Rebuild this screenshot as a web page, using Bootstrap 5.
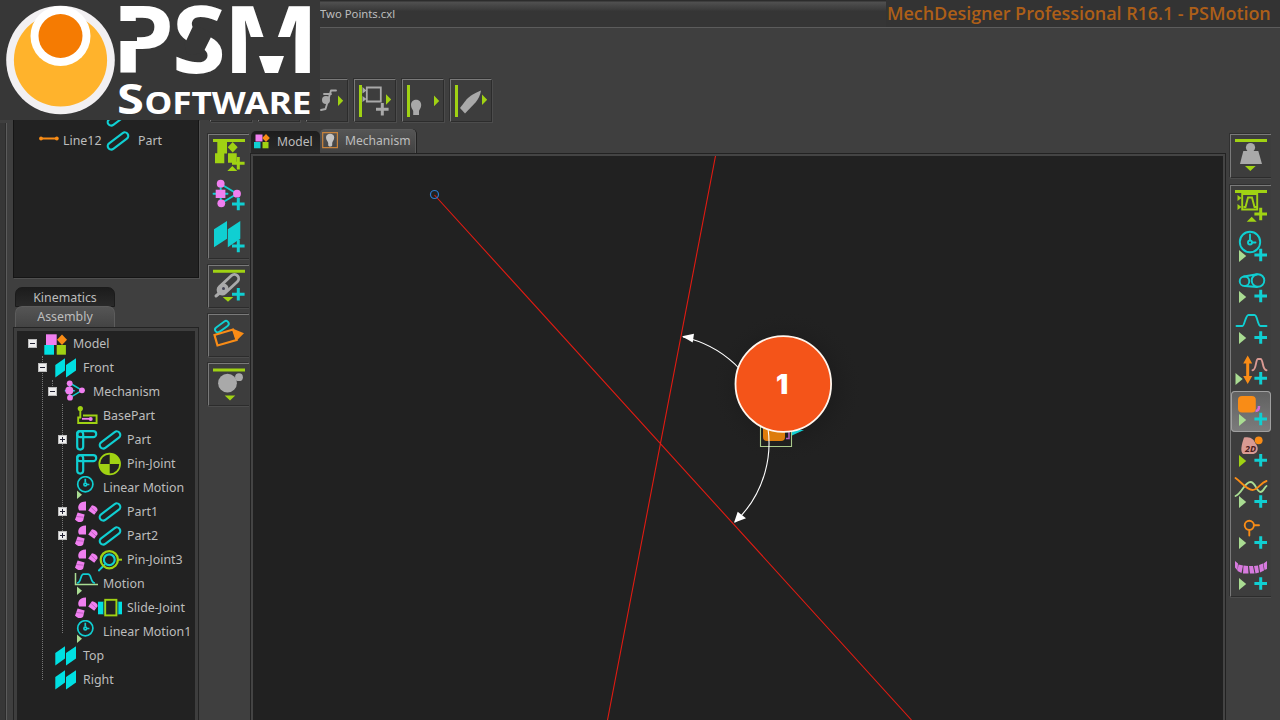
<!DOCTYPE html>
<html lang="en">
<head>
<meta charset="utf-8">
<meta name="viewport" content="width=device-width, initial-scale=1">
<title>MechDesigner Professional R16.1 - PSMotion</title>
<link rel="stylesheet" href="https://cdn.jsdelivr.net/npm/bootstrap@5.3.0/dist/css/bootstrap.min.css">
<script src="https://cdn.jsdelivr.net/npm/bootstrap@5.3.0/dist/js/bootstrap.bundle.min.js"></script>
<style>
  :root { --lime:#a0d213; --cyan:#10cfd2; --pink:#f07ff0; --orange:#f98c16; --mint:#a9dc92; --grey:#a9a9a9; --well:#222; }
  body { width:1280px; height:720px; overflow:hidden; background:#3f3f3f; color:#bdbdbd; font:12.4px/24px "Noto Sans","Open Sans",sans-serif; }
  svg { display:block; flex:none; }
  .titlebar { height:28px; background:linear-gradient(#2c2c2c 0 1px,#505050 2px,#3a3a3a 10px,#353535 11px); border-bottom:1px solid #5c5c5c; }
  .doc-name { padding-left:320px; font-size:11.3px; line-height:28px; }
  .product { width:394px; height:27px; padding-left:1px; background:#333; color:#ad5f18; font:600 18px/27px "Open Sans","Noto Sans",sans-serif; letter-spacing:-.06px; white-space:nowrap; }
  .ribbon { height:95px; padding:50px 0 0 210px; gap:6px; }
  .tool-frame { border:1px solid; border-color:#7a7a7a #2c2c2c #2c2c2c #7a7a7a; background:#3d3d3d; box-shadow:-1px -1px #303030, 1px 1px #4c4c4c; }
  .ribbon .tool-frame { width:42px; height:43px; margin-top:1px; }
  .brand { left:0; top:0; width:320px; height:120px; background:#373737; z-index:5; }
  .workspace { height:597px; }
  .side { width:208px; padding-left:5px; background:linear-gradient(90deg,#373737 5px,#2c2c2c 5px 6px,#5c5c5c 6px 7px,#3f3f3f 7px); }
  .items { margin:-3px 0 0 8px; width:186px; height:158px; border:1px solid #151515; border-top:0; background:var(--well); box-shadow:1px 1px #505050; overflow:hidden; }
  .line-row { height:24px; }
  .line-first { margin-top:-15px; }
  .side-tab { width:100px; margin-left:10px; text-align:center; border-radius:7px 7px 0 0; }
  .tab-off { height:20px; margin-top:9px; line-height:20px; background:linear-gradient(#1c1c1c,#292929); border:1px solid #1b1b1b; }
  .tab-on { height:23px; margin-top:-1px; line-height:20px; background:linear-gradient(#555,#424242); border:1px solid #5c5c5c; border-bottom:0; position:relative; }
  .tree { margin:-1px 0 0 9px; width:184px; height:394px; border:3px solid #3e3e3e; border-bottom:0; outline:1px solid #232323; background:var(--well); padding-top:1px; }
  .tree-row { height:24px; white-space:nowrap; }
  .d0 { padding-left:10px; } .d1 { padding-left:20px; } .d2 { padding-left:30px; } .d3 { padding-left:40px; }
  .knob { width:9px; height:9px; margin:-1px 7px 0 1px; flex:none; position:relative; z-index:1; }
  .box { background:#eee; border:1px solid #bbb; }
  .box::before { content:""; position:absolute; left:1px; top:3px; width:5px; height:1px; background:#223; }
  .box.more::after { content:""; position:absolute; left:3px; top:1px; width:1px; height:5px; background:#223; }
  .tree-row span { padding-left:5px; }
  .guide { width:0; border-left:1px dotted #777; }
  .tools-left { width:42px; padding-top:11px; gap:6px; }
  .tools-left .tool-frame { width:41px; border-right:0; box-shadow:-1px -1px #303030, 0 1px #4c4c4c; }
  .mainview { width:975px; padding:6px 0 0 1px; }
  .view-tabs { height:25px; font-size:12.1px; }
  .view-tab { border-radius:5px 5px 0 0; line-height:22px; }
  .vt-model { width:69px; margin-top:2px; background:linear-gradient(#1d1d1d,#2a2a2a); line-height:21px; }
  .vt-mech { width:96px; background:linear-gradient(#555,#414141); border:1px solid #595959; border-width:1px 1px 0 0; box-shadow:1px 0 #222; }
  .canvas-frame { height:567px; border:solid #444; border-width:2px 2px 0 2px; outline:1px solid #222; background:#212121; }
  .tools-right { width:54px; padding:11px 0 0 5px; gap:7px; }
  .tools-right .tool-frame { width:41px; border-right:0; box-shadow:-1px -1px #303030, 0 1px #4c4c4c; }
  .picked { background:linear-gradient(#606060,#7c7c7c); border-radius:4px; box-shadow:inset 0 0 0 1px #a0a0a0; }
  .thin { fill:none; stroke-width:1.9; stroke-linecap:round; stroke-linejoin:round; }
  .c { stroke:var(--cyan); } .o { stroke:var(--orange); } .p { stroke:#d99a93; } .m { stroke:var(--mint); } .g { stroke:var(--lime); } .y { stroke:var(--grey); }
  .fc { fill:var(--cyan); } .fo { fill:var(--orange); } .fp { fill:var(--pink); } .fm { fill:var(--mint); } .fg { fill:var(--lime); } .fy { fill:var(--grey); }
</style>
</head>
<body class="position-relative">

<svg width="0" height="0" class="position-absolute">
  <defs>
    <path id="plus" d="M-6.3 0H6.3M0-6.3V6.3" fill="none" stroke-width="3"/>
    <path id="play" d="M0-6L7.2 0L0 6Z"/>
    <symbol id="i-model" viewBox="0 0 24 24"><path class="fp" d="M2 2.300h10.700V13H2z"/><path class="fo" d="M18 2.500l5 5.200-5 5.200-5-5.200z"/><path fill="#00dfe2" d="M.3 13H10v9.700H.3z"/><path class="fg" d="M12.700 13h9.200v9.700h-9.200z"/></symbol>
    <symbol id="i-plane" viewBox="0 0 24 24"><path fill="#00dfe2" d="M1.300 9l9.700-6.700v12.300L1.300 21.500zM12 9l10-6.700v12.300L12 21.500z"/></symbol>
    <symbol id="i-mech" viewBox="0 0 24 24"><path d="M5.700 3L18 10.300 6 17.700M.8 10.700h10M5.700 3v14" fill="none" stroke="#10cfd2" stroke-width="1.500"/><g class="fp"><circle cx="5.700" cy="3.300" r="2.900"/><circle cx="5.300" cy="10.500" r="4"/><circle cx="6" cy="17.700" r="2.900"/><circle cx="18" cy="10.300" r="2.900"/></g></symbol>
    <symbol id="i-base" viewBox="0 0 24 24"><path d="M6.300 5v8.500H4.200V19H22.600v-7.500H9" fill="none" stroke="#a0d213" stroke-width="1.900"/><circle cx="6.300" cy="4.600" r="2.600" class="fg"/><path d="M8 14.800h8" stroke="#f07ff0" stroke-width="1.800"/><circle cx="16.700" cy="15" r="2" class="fp"/></symbol>
    <symbol id="i-bent" viewBox="0 0 24 24"><g fill="none" stroke="#10cfd2" stroke-width="2.200"><rect x="3.200" y="3.200" width="19" height="6" rx="3"/><rect x="3.200" y="3.200" width="6" height="18.400" rx="3"/></g></symbol>
    <symbol id="i-part" viewBox="0 0 24 24"><rect fill="none" stroke="#10cfd2" stroke-width="2.100" x="0" y="8.500" width="24" height="7" rx="3.500" transform="rotate(-37 12 12)"/></symbol>
    <symbol id="i-pin" viewBox="0 0 24 24"><circle cx="11.700" cy="12" r="10.400" fill="#222" stroke="#a0d213" stroke-width="1.700"/><path class="fg" d="M11.700 12V1.500A10.500 10.500 0 0 1 22.200 12zM11.700 12v10.500A10.500 10.500 0 0 1 1.200 12z"/></symbol>
    <symbol id="i-clock" viewBox="0 0 24 24"><g fill="none" stroke="#10cfd2" stroke-width="1.700"><circle cx="11.300" cy="8.300" r="7.600"/><circle cx="11.300" cy="8.500" r="1.400"/><path d="M11.300 6.500V2.700M13 8.500h2.400"/></g><path class="fm" d="M3 14.500l5 4.200-5 4.300z"/></symbol>
    <symbol id="i-blobs" viewBox="0 0 24 24"><g class="fp"><path d="M12 1.500V10.500H5.200C2.700 7 5 1.200 12 1.500z"/><path d="M14.200 10.500L18 5.200c2.500.2 5.800 2.300 5.600 5l-3.300 4.600z"/><path d="M3.600 12.600l7 1.900L9.200 20.500c-2 2.500-6.800 1.800-8-1.300z"/></g><path d="M2 16.500l7.500.7M17.300 7.600l4.700 4.400" stroke="#a954aa" stroke-width=".7"/></symbol>
    <symbol id="i-pin3" viewBox="0 0 24 24"><path d="M.3 23L7 16.300" stroke="#10cfd2" stroke-width="2"/><circle cx="11.300" cy="11.700" r="8.600" fill="none" stroke="#a0d213" stroke-width="2.300"/><circle cx="11.300" cy="11.700" r="5.400" fill="none" stroke="#10cfd2" stroke-width="2.200"/><path d="M20 11.700h4" stroke="#a0d213" stroke-width="2"/></symbol>
    <symbol id="i-motion" viewBox="0 0 24 24"><path d="M1.500 1v11.500H24" fill="none" stroke="#a9dc92" stroke-width="1.500"/><path d="M3 11c4.500 0 3-8.800 6.500-8.800h4.500c4 0 2 8.800 7 8.800" fill="none" stroke="#10cfd2" stroke-width="1.700"/><path class="fm" d="M3 14.500l5 4.200-5 4.300z"/></symbol>
    <symbol id="i-slide" viewBox="0 0 24 24"><path fill="#00dfe2" d="M0 5.700h24v12.600H0z"/><rect x="7.200" y="3.800" width="11.200" height="15.600" fill="#222" stroke="#a0d213" stroke-width="1.900"/><path d="M5.700 5.700v12.600M19.900 5.700v12.600" stroke="#222" stroke-width=".8"/></symbol>
  </defs>
</svg>

<header class="titlebar d-flex justify-content-between">
  <div class="doc-name">Two Points.cxl</div>
  <div class="product">MechDesigner Professional R16.1 - PSMotion</div>
</header>

<div class="ribbon d-flex">
  <div class="tool-frame"></div>
  <div class="tool-frame"></div>
  <div class="tool-frame"><svg width="40" height="41" viewBox="307 79 40 41"><path class="thin y" d="M321 109l4.500-1 5.500-18.500h5M324 93h7"/><circle cx="326" cy="99" r="4" class="fy"/><path class="fg" d="M338 94.500l5.200 5.200-5.200 5.300z"/></svg></div>
  <div class="tool-frame"><svg width="40" height="41" viewBox="355 79 40 41"><path class="fg" d="M359 84h3v32h-3zM386 93.300l5.200 5.200-5.200 5.300z"/><path d="M366.800 86.500h14v14h-14z" fill="none" stroke="#a9a9a9" stroke-width="1.800"/><path class="fy" d="M362.500 86l4 3.500-4 3zM362.500 95l4 3-4 3z"/><use href="#plus" x="382.300" y="108.300" class="y"/></svg></div>
  <div class="tool-frame"><svg width="40" height="41" viewBox="403 79 40 41"><path class="fg" d="M407 84h3v32h-3zM434 94.500l5.200 5.400-5.200 5.400z"/><path class="fy" d="M411 104c0-7 10.200-7 10.200 0 0 3-1.700 4-2.200 6v4h-5.800v-4c-.5-2-2.200-3-2.200-6z"/></svg></div>
  <div class="tool-frame"><svg width="40" height="41" viewBox="451 79 40 41"><path class="fg" d="M455 84h3v32h-3zM482 93.500l5.200 5.200-5.200 5.300z"/><path class="fy" d="M460 107l6.500-8.500c4-4 8-6.500 14.500-9-.8 5-2.500 8.500-5.500 12l-10.500 11z"/></svg></div>
</div>

<main class="workspace d-flex">
  <aside class="side">
    <div class="items">
      <div class="line-row line-first d-flex"><svg width="24" height="24" viewBox="0 0 24 24" style="margin-left:92px"><use href="#i-part"/></svg></div>
      <div class="line-row d-flex align-items-center">
        <svg width="20" height="24" viewBox="39 129 20 24" style="margin-left:25px"><path class="thin o" d="M41 138.500h16"/><circle cx="41" cy="138.500" r="1.900" class="fo"/><circle cx="56.800" cy="138.500" r="1.900" class="fo"/></svg>
        <span style="margin-left:4px;width:43px">Line12</span>
        <svg width="24" height="24"><use href="#i-part"/></svg>
        <span style="margin-left:8px">Part</span>
      </div>
    </div>
    <div class="side-tab tab-off">Kinematics</div>
    <div class="side-tab tab-on">Assembly</div>
    <div class="tree position-relative">
      <i class="guide position-absolute" style="left:25px;top:25px;height:324px"></i>
      <i class="guide position-absolute" style="left:35px;top:49px;height:10px"></i>
      <i class="guide position-absolute" style="left:45px;top:73px;height:229px"></i>
      <div class="tree-row d-flex align-items-center d0"><b class="knob box"></b><svg width="24" height="24"><use href="#i-model"/></svg><span>Model</span></div>
      <div class="tree-row d-flex align-items-center d1"><b class="knob box"></b><svg width="24" height="24"><use href="#i-plane"/></svg><span>Front</span></div>
      <div class="tree-row d-flex align-items-center d2"><b class="knob box"></b><svg width="24" height="24"><use href="#i-mech"/></svg><span>Mechanism</span></div>
      <div class="tree-row d-flex align-items-center d3"><b class="knob"></b><svg width="24" height="24"><use href="#i-base"/></svg><span>BasePart</span></div>
      <div class="tree-row d-flex align-items-center d3"><b class="knob box more"></b><svg width="24" height="24"><use href="#i-bent"/></svg><svg width="24" height="24"><use href="#i-part"/></svg><span>Part</span></div>
      <div class="tree-row d-flex align-items-center d3"><b class="knob"></b><svg width="24" height="24"><use href="#i-bent"/></svg><svg width="24" height="24"><use href="#i-pin"/></svg><span>Pin-Joint</span></div>
      <div class="tree-row d-flex align-items-center d3"><b class="knob"></b><svg width="24" height="24"><use href="#i-clock"/></svg><span>Linear Motion</span></div>
      <div class="tree-row d-flex align-items-center d3"><b class="knob box more"></b><svg width="24" height="24"><use href="#i-blobs"/></svg><svg width="24" height="24"><use href="#i-part"/></svg><span>Part1</span></div>
      <div class="tree-row d-flex align-items-center d3"><b class="knob box more"></b><svg width="24" height="24"><use href="#i-blobs"/></svg><svg width="24" height="24"><use href="#i-part"/></svg><span>Part2</span></div>
      <div class="tree-row d-flex align-items-center d3"><b class="knob"></b><svg width="24" height="24"><use href="#i-blobs"/></svg><svg width="24" height="24"><use href="#i-pin3"/></svg><span>Pin-Joint3</span></div>
      <div class="tree-row d-flex align-items-center d3"><b class="knob"></b><svg width="24" height="24"><use href="#i-motion"/></svg><span>Motion</span></div>
      <div class="tree-row d-flex align-items-center d3"><b class="knob"></b><svg width="24" height="24"><use href="#i-blobs"/></svg><svg width="24" height="24"><use href="#i-slide"/></svg><span>Slide-Joint</span></div>
      <div class="tree-row d-flex align-items-center d3"><b class="knob"></b><svg width="24" height="24"><use href="#i-clock"/></svg><span>Linear Motion1</span></div>
      <div class="tree-row d-flex align-items-center d1"><b class="knob"></b><svg width="24" height="24"><use href="#i-plane"/></svg><span>Top</span></div>
      <div class="tree-row d-flex align-items-center d1"><b class="knob"></b><svg width="24" height="24"><use href="#i-plane"/></svg><span>Right</span></div>
    </div>
  </aside>

  <nav class="tools-left d-flex flex-column">
    <div class="tool-frame">
      <svg width="40" height="41" viewBox="209 135 40 41"><path class="fg" d="M213 139h32v3h-32zM217.300 142h9.700v11.500h-9.700zM215 153.300h9.300v10H215zM228 153.300h8.700v9.400H228zM232.700 142l5 5.300-5 5.300-5-5.300zM227.300 171l5-5 5 5z"/><use href="#plus" x="238.300" y="163.300" class="g"/></svg>
      <svg width="40" height="41" viewBox="209 176 40 41"><path class="thin c" d="M213.500 193.700h14M220.700 184l16.300 9.700-15.700 9.600M220.700 184v18"/><g class="fp"><circle cx="220.700" cy="183.700" r="3.900"/><circle cx="237" cy="193.700" r="3.900"/><circle cx="221.300" cy="203.300" r="3.900"/><path d="M215.700 189.700h9.700v8.300h-9.700z"/></g><use href="#plus" x="238.300" y="204" class="c"/></svg>
      <svg width="40" height="41" viewBox="209 217 40 41"><path class="fc" d="M214 229.300l13-8.300v17.700l-13 8.600zM227.800 229.300l12.500-8.300v17.700l-12.500 8.600z"/><use href="#plus" x="238.300" y="246" class="c"/></svg>
    </div>
    <div class="tool-frame"><svg width="40" height="41" viewBox="209 266 40 41"><path class="fg" d="M213 269.700h32v3h-32zM222.700 297h10.600l-5.300 4.700z"/><rect x="216" y="280" width="25" height="8.500" rx="4.200" fill="none" stroke="#a9a9a9" stroke-width="2.800" transform="rotate(-43 228.500 284.500)"/><path d="M216 296l6-5" stroke="#a9a9a9" stroke-width="3" stroke-linecap="round"/><circle cx="223.500" cy="288.500" r="5" class="fy"/><circle cx="223.500" cy="288.500" r="1.500" fill="#445"/><use href="#plus" x="238.300" y="294.300" class="c"/></svg></div>
    <div class="tool-frame"><svg width="40" height="41" viewBox="209 314.500 40 41"><rect class="thin c" x="214" y="323.500" width="15.500" height="5.500" rx="2.700" transform="rotate(-36 221.700 326)"/><path d="M214.500 334.500l18.500-5.500 3.500 10.500-19 5.500z" fill="none" stroke="#f98c16" stroke-width="2.200"/><path class="fo" d="M232.500 328l11.500 4.700-8 8z"/></svg></div>
    <div class="tool-frame"><svg width="40" height="41" viewBox="209 363.500 40 41"><path class="fg" d="M213 368h32v3h-32zM224.700 395h10.600l-5.300 5z"/><circle cx="227.500" cy="382.700" r="9.400" class="fy"/><circle cx="239" cy="376.700" r="3.900" class="fy"/></svg></div>
  </nav>

  <section class="mainview">
    <div class="view-tabs d-flex">
      <div class="view-tab vt-model d-flex"><svg width="26" height="22" viewBox="251 131 26 22"><path class="fp" d="M255.500 134.500h7v7h-7z"/><path class="fo" d="M266 134l3.800 4-3.800 4-3.800-4z"/><path class="fc" d="M254 142h6.500v6.300H254z"/><path class="fg" d="M262.500 142h6v6.300h-6z"/></svg><span>Model</span></div>
      <div class="view-tab vt-mech d-flex"><svg width="25" height="24" viewBox="320 130 25 24"><path d="M322.700 132.700h14.700v15h-14.700z" fill="none" stroke="#c9843c" stroke-width="1.200"/><path fill="#c4c4c4" d="M326 137.500c0-5 8.200-5 8.200 0 0 2.500-1.700 3.500-2 5.500v2.500l-1 1h-2l-1-1V143c-.4-2-2.200-3-2.200-5.500z"/></svg><span>Mechanism</span></div>
    </div>
    <div class="canvas-frame">
      <svg width="970" height="564" viewBox="253 156 970 564">
        <defs><radialGradient id="halo"><stop offset=".6" stop-color="#1a1a1a" stop-opacity=".55"/><stop offset="1" stop-color="#212121" stop-opacity="0"/></radialGradient></defs>
        <circle cx="787" cy="387" r="76" fill="url(#halo)"/>
        <g fill="none" stroke="#e01b12" stroke-width="1.100"><path d="M434.500 195L911.500 720M715.500 156L607.500 720"/></g>
        <circle cx="434.500" cy="194.500" r="4" fill="none" stroke="#2d7bd0" stroke-width="1.200"/>
        <path fill="#dd7c0c" d="M763 425h22v12q0 4-4 4h-14q-4 0-4-4z"/><path d="M786 438.500h3V430" fill="none" stroke="#b560c0" stroke-width="1.500"/><path class="fc" d="M791 430h13l-12 5.500z"/>
        <path d="M760.500 425v21.500h31V425" fill="none" stroke="#a9c98a" stroke-width="1.100"/>
        <path d="M683 337A108.500 108.500 0 0 1 735 522" fill="none" stroke="#fff" stroke-width="1.100"/>
        <path fill="#fff" d="M682 336.300l12-2.500-1.300 8.700zM734 522.700l3.700-11 8.300 6.500z"/>
        <circle cx="783.300" cy="384" r="47.800" fill="#f45419" stroke="#fff6ee" stroke-width="1.800"/>
        <text x="782" y="394" text-anchor="middle" font-family="Inter,sans-serif" font-weight="900" font-size="27" fill="#fff">1</text>
      </svg>
    </div>
  </section>

  <nav class="tools-right d-flex flex-column">
    <div class="tool-frame"><svg width="40" height="42" viewBox="1231 135 40 42"><path class="fg" d="M1235 139h32v3h-32zM1245 166h10.700l-5.400 5z"/><circle cx="1250.500" cy="147.500" r="4.600" class="fy"/><path class="fy" d="M1243.300 151h15l3.700 13h-22z"/></svg></div>
    <div class="tool-frame">
      <svg width="40" height="41" viewBox="1231 186 40 41"><path class="fg" d="M1235 190h32v3h-32zM1246.700 221.700l5-5 5 5zM1237.500 195l4 3-4 3zM1237.500 204l4 3-4 3z"/><path d="M1242.200 194h15v15.500h-15zM1243.500 207l2 0 2.500-9.500h4l2.500 9.500h2" fill="none" stroke="#a0d213" stroke-width="1.900"/><use href="#plus" x="1260.700" y="214" class="g"/></svg>
      <svg width="40" height="41" viewBox="1231 227 40 41"><circle class="thin c" cx="1250" cy="242" r="10.200"/><circle class="thin c" cx="1250" cy="242.500" r="2"/><path class="thin c" d="M1250 240v-5.500M1252.500 242.500h3"/><use href="#play" x="1239" y="256" class="fm"/><use href="#plus" x="1260.700" y="255" class="c"/></svg>
      <svg width="40" height="41" viewBox="1231 268 40 41"><g class="thin c"><circle cx="1244.500" cy="281.300" r="4.800"/><circle cx="1258" cy="280.500" r="6.300"/><path d="M1244 276.500l13-2.200M1245 286l12 1"/></g><use href="#play" x="1239" y="297" class="fm"/><use href="#plus" x="1260.700" y="296" class="c"/></svg>
      <svg width="40" height="41" viewBox="1231 309 40 41"><path class="thin c" d="M1236.500 326h6c2 0 3-11 6-11h6c3 0 3 11 6 11h6"/><use href="#play" x="1239" y="338" class="fm"/><use href="#plus" x="1260.700" y="337.500" class="c"/></svg>
      <svg width="40" height="41" viewBox="1231 350 40 41"><path d="M1247.700 361v18" stroke="#f98c16" stroke-width="3"/><path class="fo" d="M1247.700 355.500l4.500 8h-9zM1247.700 384l4.500-8h-9z"/><path class="thin p" d="M1252.500 370.300c4 0 3-11.300 5.500-11.300h2.500c3 0 1.500 11.300 6 11.300"/><use href="#play" x="1235.500" y="379" class="fm"/><use href="#plus" x="1260.700" y="378.300" class="c"/></svg>
      <svg class="picked" width="40" height="41" viewBox="1231 391 40 41"><rect class="fo" x="1238" y="396" width="17.800" height="16.500" rx="4"/><path d="M1255.500 411c2.500 0 3.500-2 3.500-5" fill="none" stroke="#d070d8" stroke-width="2.500"/><use href="#play" x="1239" y="420" class="fm"/><use href="#plus" x="1260.700" y="419" class="c"/></svg>
      <svg width="40" height="41" viewBox="1231 432 40 41"><path fill="#d99a93" d="M1244 437.500c7-1.500 10 2 11.500 6 3 3 3.500 9-2 10.500h-10.500c-3-3-1.500-9 1-16.500z"/><circle cx="1258.700" cy="440.300" r="3.900" class="fo"/><text x="1245" y="452" font-family="Noto Sans,sans-serif" font-size="9" font-weight="700" font-style="italic" textLength="11" fill="#4c2020">2D</text><use href="#play" x="1239" y="461" class="fg"/><use href="#plus" x="1260.700" y="460.300" class="c"/></svg>
      <svg width="40" height="41" viewBox="1231 473 40 41"><path class="thin m" d="M1235.500 496c7-3 9-14 15-14 5 0 6 10 10 10 3 0 4-5 6-6"/><path class="thin o" d="M1235.500 478c6 4 11 12 17 12 5 0 8-7 14-9"/><use href="#play" x="1239" y="502" class="fm"/><use href="#plus" x="1260.700" y="501.500" class="c"/></svg>
      <svg width="40" height="41" viewBox="1231 514 40 41"><circle class="thin o" cx="1249.300" cy="525.300" r="4.600"/><path class="thin o" d="M1254 525.300h5M1249.300 530v5.500"/><use href="#play" x="1239" y="543" class="fm"/><use href="#plus" x="1260.700" y="542.500" class="c"/></svg>
      <svg width="40" height="41" viewBox="1231 555 40 41"><path fill="#d77ade" d="M1235 561l3 2.500-.5 7-2.500-3zM1238.500 564.500l4.500 1-1.500 7.500-4-2zM1243.500 565.500l4.500.5.5 7.500h-5.500zM1249 566h4l1.500 7.500h-4.500zM1254 566l4-.5 1 7-3.500 1zM1259 565l4-1.500 1 7-4 2zM1263.500 563.500l3.500-2.500v8l-2.500 1z"/><use href="#play" x="1239" y="584" class="fm"/><use href="#plus" x="1260.700" y="583.500" class="c"/></svg>
    </div>
  </nav>
</main>

<div class="brand position-absolute">
  <svg width="320" height="120" viewBox="0 0 320 120">
    <circle cx="60.500" cy="60" r="54.300" fill="#f2f0f2"/>
    <circle cx="60.500" cy="60" r="46.600" fill="#ffb32c"/>
    <circle cx="60.500" cy="36" r="30" fill="#fff"/>
    <circle cx="60.500" cy="36" r="22" fill="#f57b02"/>
    <g font-family="Noto Sans,Open Sans,sans-serif" font-weight="700" fill="#fff">
      <g font-size="92.500">
        <text x="112" y="73" textLength="62" lengthAdjust="spacingAndGlyphs">P</text>
        <text x="172" y="73" textLength="54" lengthAdjust="spacingAndGlyphs">S</text>
        <text x="223" y="73" textLength="96" lengthAdjust="spacingAndGlyphs">M</text>
      </g>
      <text x="117" y="114" font-size="42" textLength="27" lengthAdjust="spacingAndGlyphs">S</text>
      <text x="144.500" y="114" font-size="29.500" textLength="167" lengthAdjust="spacingAndGlyphs">OFTWARE</text>
    </g>
    <path fill="#373737" d="M118 21h19v20h-19zM194 24l17 9 0 4-7 14 2 2-19 2-3-12 2-2zM247 37h47v40h-47z"/>
    <path fill="#fff" d="M259 56h25l-6 17h-13z"/>
  </svg>
</div>
</body>
</html>
